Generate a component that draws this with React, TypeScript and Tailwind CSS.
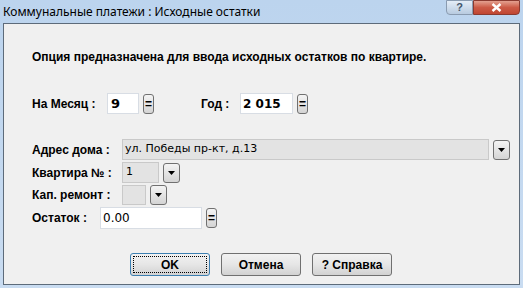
import React from 'react';

const font = { fontFamily: '"Liberation Sans", Arial, sans-serif' };
const wide = { fontFamily: '"DejaVu Sans", Verdana, sans-serif' };

function EqButton() {
  return (
    <div className="w-[11px] h-[20px] rounded-[3px] border border-[#707070] bg-gradient-to-b from-[#f4f4f4] to-[#d4d4d4] flex items-center justify-center text-[12px] font-bold leading-none text-black">
      =
    </div>
  );
}

function DropButton() {
  return (
    <div className="w-[17px] h-[20px] rounded-[3px] border border-[#707070] bg-gradient-to-b from-[#f4f4f4] to-[#d4d4d4] flex items-center justify-center">
      <svg width="7" height="4" viewBox="0 0 7 4">
        <path d="M0 0 H7 L3.5 4 Z" fill="#000" />
      </svg>
    </div>
  );
}

function DialogButton({ label, focused }: { label: string; focused?: boolean }) {
  return (
    <div
      className={
        'w-[80px] h-[23px] rounded-[3px] border bg-gradient-to-b from-[#f2f2f2] via-[#e6e6e6] to-[#d2d2d2] flex items-center justify-center p-[2px] ' +
        (focused ? 'border-[#3c7fb1]' : 'border-[#707070]')
      }
    >
      <div
        className={
          'w-full h-full flex items-center justify-center text-[12px] font-bold text-black ' +
          (focused ? 'border border-dotted border-black' : '')
        }
      >
        {label}
      </div>
    </div>
  );
}

export default function App() {
  return (
    <div className="w-[523px] h-[288px] bg-gradient-to-b from-[#bcd4ee] to-[#c9dcf1] flex flex-col overflow-hidden" style={font}>
      {/* Title bar */}
      <div className="h-[23px] flex items-start">
        <div className="pl-[3px] pt-[3px] text-[12px] text-black" style={{ fontFamily: '"Noto Sans", sans-serif' }}>
          Коммунальные платежи : Исходные остатки
        </div>
        <div className="ml-auto mr-[3px] flex h-[15px]">
          <div className="w-[27px] h-full border border-[#8a9bb0] rounded-bl-[4px] bg-gradient-to-b from-[#e4edf7] to-[#b8cbe0] flex items-center justify-center text-[11px] font-bold text-[#44556a] leading-none">
            ?
          </div>
          <div className="w-[47px] h-full border border-[#8a3a30] rounded-br-[4px] bg-gradient-to-b from-[#e3a090] via-[#cc5a46] to-[#c04632] flex items-center justify-center">
            <svg width="11" height="9" viewBox="0 0 11 9">
              <path d="M1.5 1 L9.5 8 M9.5 1 L1.5 8" stroke="#fff" strokeWidth="2.4" />
            </svg>
          </div>
        </div>
      </div>

      {/* Client area */}
      <div className="ml-[3px] mr-[3px] h-[262px] border border-[#5d6b7a] bg-[#f0f0f0] pl-[28px] flex flex-col text-black">
        <div className="mt-[26px] h-[14px] flex items-center text-[12px] font-bold">
          Опция предназначена для ввода исходных остатков по квартире.
        </div>

        <div className="mt-[29px] h-[21px] flex items-center text-[12px] font-bold">
          <div className="w-[75px]">На Месяц :</div>
          <div className="w-[32px] h-[21px] bg-white border border-[#d8dde4] flex items-center pl-[3px] text-[13px]" style={wide}>9</div>
          <div className="ml-[4px]"><EqButton /></div>
          <div className="ml-[47px] w-[39px]">Год :</div>
          <div className="w-[53px] h-[21px] bg-white border border-[#d8dde4] flex items-center pl-[2px] text-[12px]" style={wide}>2 015</div>
          <div className="ml-[4px]"><EqButton /></div>
        </div>

        <div className="mt-[25px] h-[21px] flex items-center text-[12px] font-bold">
          <div className="w-[90px]">Адрес дома :</div>
          <div className="w-[367px] h-[21px] bg-[#e3e3e3] border border-[#c9c9c9] flex items-center pl-[2px] text-[11px] font-normal" style={wide}>
            ул. Победы пр-кт, д.13
          </div>
          <div className="ml-[4px]"><DropButton /></div>
        </div>

        <div className="mt-[2px] h-[21px] flex items-center text-[12px] font-bold">
          <div className="w-[90px]">Квартира № :</div>
          <div className="w-[37px] h-[21px] bg-[#e3e3e3] border border-[#c9c9c9] flex items-center pl-[3px] text-[11px] font-normal" style={wide}>
            1
          </div>
          <div className="ml-[4px]"><DropButton /></div>
        </div>

        <div className="mt-[2px] h-[20px] flex items-center text-[12px] font-bold">
          <div className="w-[90px]">Кап. ремонт :</div>
          <div className="w-[24px] h-[20px] bg-[#e3e3e3] border border-[#c9c9c9]" />
          <div className="ml-[4px]"><DropButton /></div>
        </div>

        <div className="mt-[2px] h-[22px] flex items-center text-[12px] font-bold">
          <div className="w-[68px]">Остаток :</div>
          <div className="w-[102px] h-[22px] bg-white border border-[#d8dde4] flex items-center pl-[2px] text-[12px] font-normal" style={wide}>
            0.00
          </div>
          <div className="ml-[4px]"><EqButton /></div>
        </div>

        <div className="mt-[24px] flex gap-[11px] pl-[98px]">
          <DialogButton label="OK" focused />
          <DialogButton label="Отмена" />
          <DialogButton label="? Справка" />
        </div>
      </div>
    </div>
  );
}
